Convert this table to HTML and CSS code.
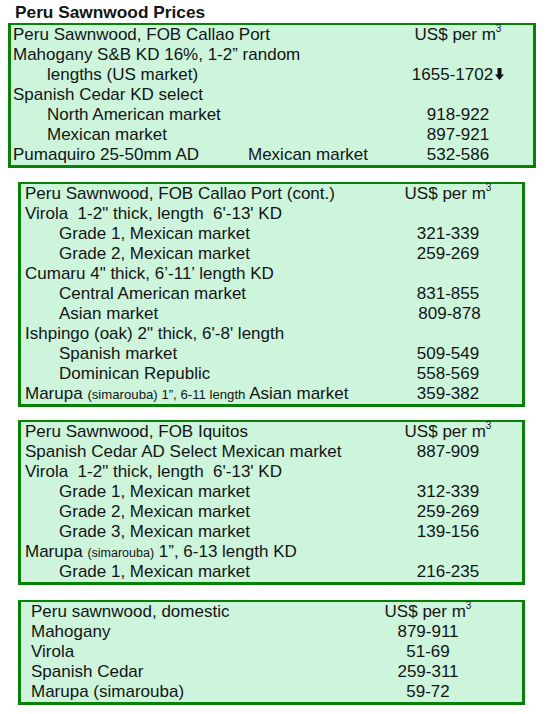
FILE: index.html
```html
<!DOCTYPE html>
<html>
<head>
<meta charset="utf-8">
<link rel="stylesheet" href="styles.css">
</head>
<body>
<h1 class="title">Peru Sawnwood Prices</h1>

<section class="box box-main">
  <div class="row"><span class="label">Peru Sawnwood, FOB Callao Port</span><span class="price">US$ per m<sup>3</sup></span></div>
  <div class="row"><span class="label">Mahogany S&amp;B KD 16%, 1-2” random</span><span class="price"></span></div>
  <div class="row"><span class="label indent">lengths (US market)</span><span class="price">1655-1702<svg class="arrow" viewBox="0 0 9 12" width="9" height="12"><path d="M2.5 0h4v6.5h2.5l-4.5 5.5-4.5-5.5h2.5z" fill="#111"/></svg></span></div>
  <div class="row"><span class="label">Spanish Cedar KD select</span><span class="price"></span></div>
  <div class="row"><span class="label indent">North American market</span><span class="price">918-922</span></div>
  <div class="row"><span class="label indent">Mexican market</span><span class="price">897-921</span></div>
  <div class="row"><span class="label"><span class="col-a">Pumaquiro 25-50mm AD</span>Mexican market</span><span class="price">532-586</span></div>
</section>

<section class="box box-sub">
  <div class="row"><span class="label">Peru Sawnwood, FOB Callao Port (cont.)</span><span class="price">US$ per m<sup>3</sup></span></div>
  <div class="row"><span class="label">Virola&nbsp; 1-2" thick, length&nbsp; 6'-13' KD</span><span class="price"></span></div>
  <div class="row"><span class="label indent">Grade 1, Mexican market</span><span class="price">321-339</span></div>
  <div class="row"><span class="label indent">Grade 2, Mexican market</span><span class="price">259-269</span></div>
  <div class="row"><span class="label">Cumaru 4" thick, 6’-11’ length KD</span><span class="price"></span></div>
  <div class="row"><span class="label indent">Central American market</span><span class="price">831-855</span></div>
  <div class="row"><span class="label indent">Asian market</span><span class="price shift">809-878</span></div>
  <div class="row"><span class="label">Ishpingo (oak) 2" thick, 6'-8' length</span><span class="price"></span></div>
  <div class="row"><span class="label indent">Spanish market</span><span class="price">509-549</span></div>
  <div class="row"><span class="label indent">Dominican Republic</span><span class="price">558-569</span></div>
  <div class="row"><span class="label">Marupa <small class="small-wide">(simarouba) 1”, 6-11 length</small> Asian market</span><span class="price">359-382</span></div>
</section>

<section class="box box-sub box-iq">
  <div class="row"><span class="label">Peru Sawnwood, FOB Iquitos</span><span class="price">US$ per m<sup>3</sup></span></div>
  <div class="row"><span class="label">Spanish Cedar AD Select Mexican market</span><span class="price">887-909</span></div>
  <div class="row"><span class="label">Virola&nbsp; 1-2" thick, length&nbsp; 6'-13' KD</span><span class="price"></span></div>
  <div class="row"><span class="label indent">Grade 1, Mexican market</span><span class="price">312-339</span></div>
  <div class="row"><span class="label indent">Grade 2, Mexican market</span><span class="price">259-269</span></div>
  <div class="row"><span class="label indent">Grade 3, Mexican market</span><span class="price">139-156</span></div>
  <div class="row"><span class="label">Marupa <small>(simarouba)</small> 1”, 6-13 length KD</span><span class="price"></span></div>
  <div class="row"><span class="label indent">Grade 1, Mexican market</span><span class="price">216-235</span></div>
</section>

<section class="box box-dom">
  <div class="row"><span class="label">Peru sawnwood, domestic</span><span class="price">US$ per m<sup>3</sup></span></div>
  <div class="row"><span class="label">Mahogany</span><span class="price">879-911</span></div>
  <div class="row"><span class="label">Virola</span><span class="price">51-69</span></div>
  <div class="row"><span class="label">Spanish Cedar</span><span class="price">259-311</span></div>
  <div class="row"><span class="label">Marupa (simarouba)</span><span class="price">59-72</span></div>
</section>
</body>
</html>
```

FILE: styles.css
```css
html, body {
  margin: 0;
  padding: 0;
  background: #ffffff;
}

body {
  font-family: "Liberation Sans", Arial, sans-serif;
  color: #141414;
  width: 546px;
}

.title {
  font-size: 17.3px;
  font-weight: bold;
  line-height: 20px;
  margin: 2px 0 1px 15px;
}

.box {
  background: #cdf5dc;
  border-style: solid;
  border-color: #078207;
  border-width: 2px 3px 3px 3px;
  font-size: 17px;
  line-height: 20px;
  display: flex;
  flex-direction: column;
}

.box-main {
  margin-left: 8px;
  width: 520px;
  padding-left: 2px;
}

.box-sub {
  margin: 14px 0 0 18px;
  width: 497px;
  padding-left: 4px;
}

.box-iq {
  margin-top: 13px;
}

.box-dom {
  margin: 15px 0 0 18px;
  width: 491px;
  padding-left: 10px;
}

.row {
  display: flex;
  height: 20px;
  white-space: nowrap;
}

.label {
  flex: 1;
}

.indent {
  padding-left: 34px;
}

.col-a {
  display: inline-block;
  width: 235px;
}

.price {
  text-align: center;
  width: 150px;
}

.box-sub .price {
  width: 148px;
}

.box-dom .price {
  width: 188px;
}

.price.shift {
  padding-left: 3px;
  box-sizing: border-box;
}

sup {
  font-size: 10px;
  line-height: 0;
  vertical-align: 8px;
}

small {
  font-size: 12.5px;
}

.small-wide {
  font-size: 13.2px;
}

.arrow {
  margin-left: 2px;
  vertical-align: 0;
}
```
